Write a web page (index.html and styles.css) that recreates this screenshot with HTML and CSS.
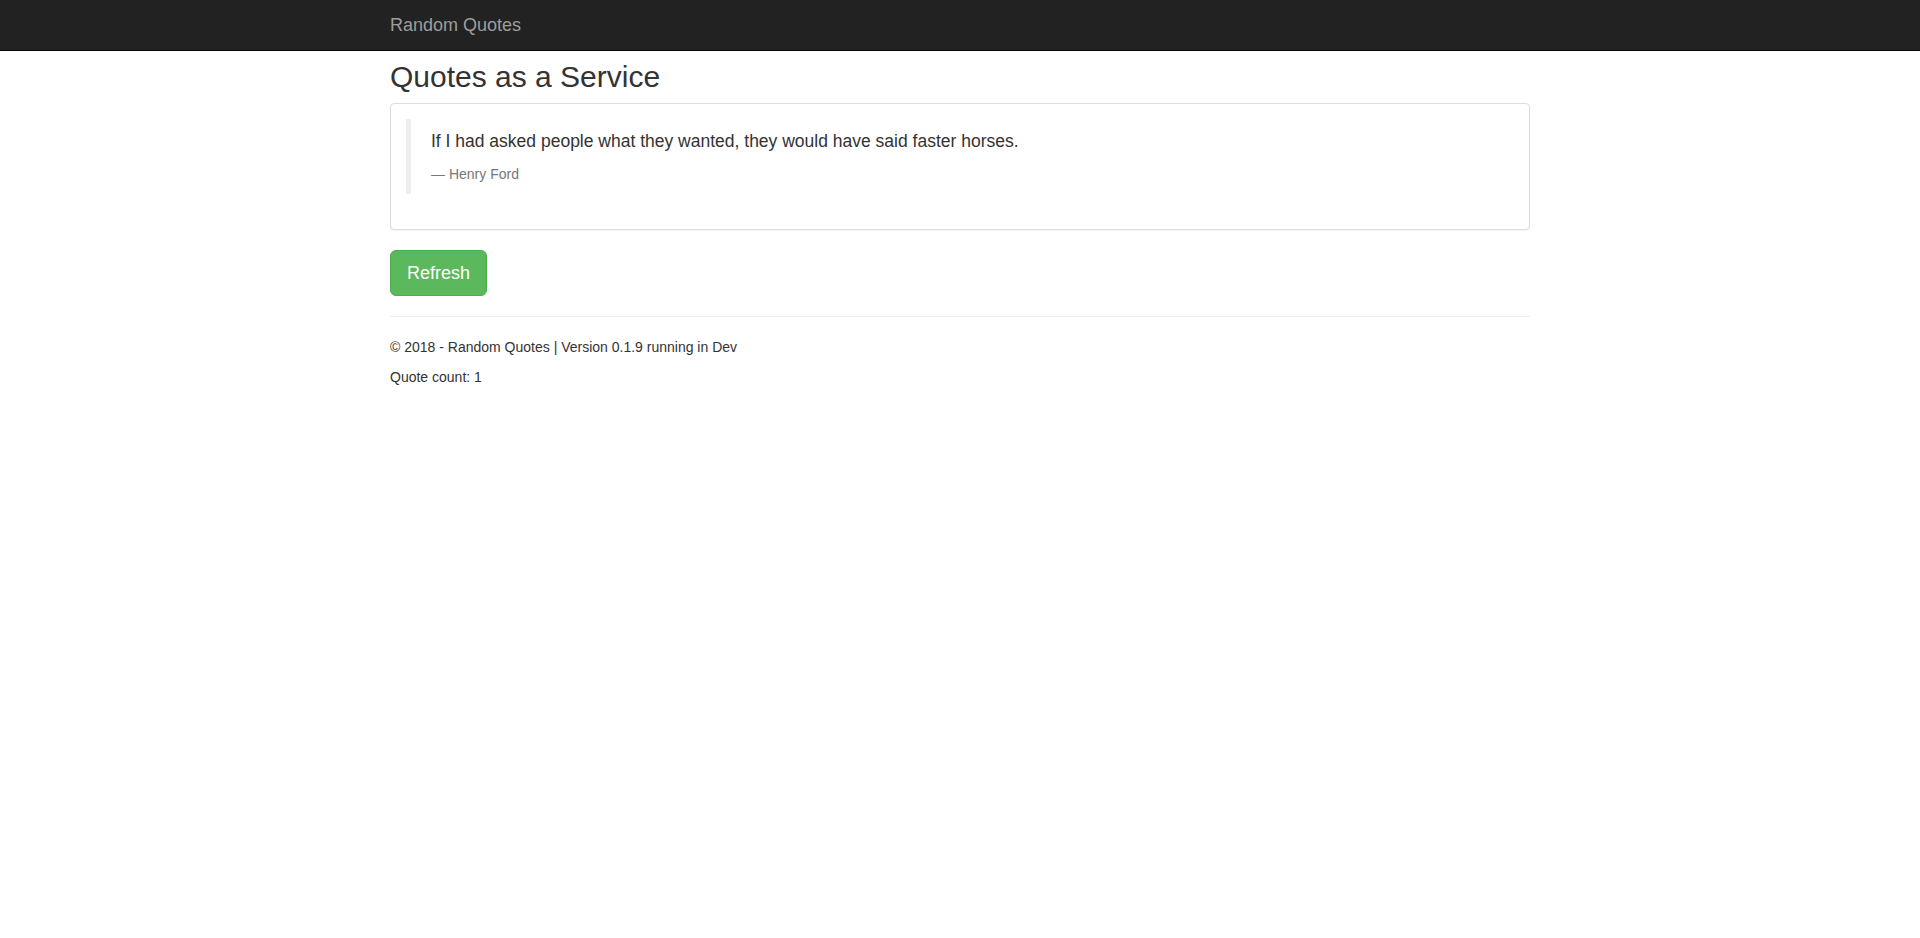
FILE: index.html
```html
<!DOCTYPE html>
<html lang="en">
<head>
<meta charset="utf-8">
<title>Random Quotes</title>
<link rel="stylesheet" href="styles.css">
</head>
<body>
<nav class="navbar">
  <div class="container">
    <a class="navbar-brand" href="#">Random Quotes</a>
  </div>
</nav>
<div class="container body-content">
  <h2 class="title">Quotes as a Service</h2>
  <div class="panel">
    <div class="panel-body">
      <blockquote class="quote">
        <p>If I had asked people what they wanted, they would have said faster horses.</p>
        <footer>Henry Ford</footer>
      </blockquote>
    </div>
  </div>
  <button class="btn-refresh" type="button">Refresh</button>
  <hr class="rule">
  <footer class="page-footer">
    <p>&copy; 2018 - Random Quotes | Version 0.1.9 running in Dev</p>
    <p>Quote count: 1</p>
  </footer>
</div>
</body>
</html>
```

FILE: styles.css
```css
* { box-sizing: border-box; }
html, body { margin: 0; padding: 0; }
body {
  font-family: "Liberation Sans", Arial, Helvetica, sans-serif;
  font-size: 14px;
  line-height: 1.42857143;
  color: #333;
  background: #fff;
}
.container {
  width: 1170px;
  margin: 0 auto;
  padding: 0 15px;
}
.navbar {
  background: #222;
  border-bottom: 1px solid #080808;
}
.navbar-brand {
  display: block;
  height: 50px;
  padding: 15px 0;
  font-size: 18px;
  line-height: 20px;
  color: #9d9d9d;
  text-decoration: none;
}
.title {
  font-size: 30px;
  font-weight: 500;
  line-height: 1.1;
  margin: 9px 0 10px;
  color: #333;
}
.panel {
  margin-bottom: 20px;
  background: #fff;
  border: 1px solid #ddd;
  border-radius: 4px;
  box-shadow: 0 1px 1px rgba(0,0,0,.05);
}
.panel-body { padding: 15px; }
.quote {
  margin: 0 0 20px;
  padding: 10px 20px;
  border-left: 5px solid #eee;
  font-size: 17.5px;
}
.quote p { margin: 0 0 10px; }
.quote footer {
  display: block;
  font-size: 80%;
  line-height: 1.42857143;
  color: #777;
}
.quote footer::before { content: "\2014 \00A0"; }
.btn-refresh {
  display: block;
  margin: 0;
  padding: 10px 16px;
  font-family: inherit;
  font-size: 18px;
  line-height: 1.3333333;
  color: #fff;
  background: #5cb85c;
  border: 1px solid #4cae4c;
  border-radius: 6px;
  cursor: pointer;
}
.rule {
  margin: 20px 0;
  border: 0;
  border-top: 1px solid #eee;
  height: 0;
}
.page-footer p { margin: 0 0 10px; }
```
